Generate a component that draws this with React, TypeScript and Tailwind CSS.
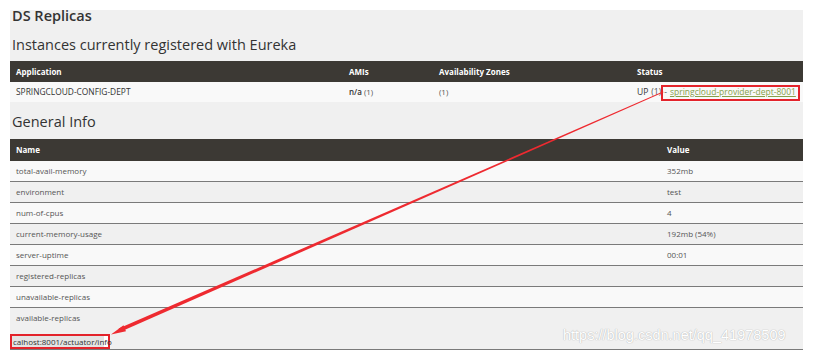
const instances = [
  {
    app: "SPRINGCLOUD-CONFIG-DEPT",
    amis: "n/a",
    zones: "(1)",
    link: "springcloud-provider-dept-8001",
  },
];

const info = [
  ["total-avail-memory", "352mb"],
  ["environment", "test"],
  ["num-of-cpus", "4"],
  ["current-memory-usage", "192mb (54%)"],
  ["server-uptime", "00:01"],
  ["registered-replicas", ""],
  ["unavailable-replicas", ""],
];

function Arrow() {
  // tapered red annotation line with a head at the lower-left end
  return (
    <svg
      className="pointer-events-none absolute left-0 top-0"
      width="816"
      height="356"
      viewBox="0 0 816 356"
    >
      <polygon
        points="663,91.5 663.6,92.3 121,331.6 118.6,328.6"
        fill="#ee2a30"
      />
      <polygon points="111,334.5 123.5,325.2 126,331.2" fill="#ee2a30" />
    </svg>
  );
}

export default function App() {
  return (
    <div className="relative h-[356px] w-[816px] overflow-hidden bg-white font-['Open_Sans',sans-serif] text-[#555]">
      <div className="ml-[10px] mt-[10px] flex h-[339px] w-[793px] flex-col bg-[#f0f0f0]">
        <h1 className="h-[12px] pl-[2px] text-[14.5px] font-semibold leading-[12px] text-[#333]">
          DS Replicas
        </h1>
        <h2 className="mt-[16px] h-[14px] pl-[2px] text-[14.5px] leading-[14px] text-[#333]">
          Instances currently registered with Eureka
        </h2>

        <div className="mt-[9px] text-[8px]">
          <div className="flex h-[21px] items-center bg-[#3c3934] font-bold text-white">
            <div className="w-[333px] pl-[6px]">Application</div>
            <div className="w-[90px] pl-[6px]">AMIs</div>
            <div className="w-[198px] pl-[6px]">Availability Zones</div>
            <div className="flex-1 pl-[6px]">Status</div>
          </div>
          {instances.map((r) => (
            <div key={r.app} className="flex h-[20px] items-center bg-[#f9f9f9]">
              <div className="w-[333px] pl-[6px] text-[8.4px] text-[#333]">{r.app}</div>
              <div className="w-[90px] pl-[6px]">
                <span className="font-semibold text-[#333]">{r.amis}</span> (1)
              </div>
              <div className="w-[198px] pl-[6px]">{r.zones}</div>
              <div className="flex flex-1 items-center pl-[6px] text-[8.5px]">
                <span className="text-[#333]">UP</span>
                <span className="ml-[3px]">(1)</span>
                <span className="ml-[3px]">-</span>
                <a className="ml-[3px] text-[#86a04a] underline">{r.link}</a>
              </div>
            </div>
          ))}
        </div>

        <h2 className="mt-[13px] h-[14px] pl-[2px] text-[14.5px] leading-[14px] text-[#333]">
          General Info
        </h2>

        <div className="mt-[10px] text-[8px]">
          <div className="flex h-[22px] items-center bg-[#3c3934] font-bold text-white">
            <div className="w-[651px] pl-[6px]">Name</div>
            <div className="flex-1 pl-[6px]">Value</div>
          </div>
          {info.map(([k, v], i) => (
            <div
              key={k}
              className={
                i % 2 === 0
                  ? "flex h-[21px] items-center border-b border-[#7a7a7a] bg-[#f9f9f9]"
                  : "flex h-[21px] items-center border-b border-[#7a7a7a] bg-[#f0f0f0]"
              }
            >
              <div className="w-[651px] pl-[6px]">{k}</div>
              <div className="flex-1 pl-[6px]">{v}</div>
            </div>
          ))}
          <div className="flex h-[42px] border-b border-[#7a7a7a] bg-[#f0f0f0]">
            <div className="flex h-[20px] w-[651px] items-center pl-[6px]">
              available-replicas
            </div>
          </div>
        </div>
      </div>

      {/* annotation box around the instance link */}
      <div className="pointer-events-none absolute left-[661px] top-[85px] h-[16px] w-[139px] border-2 border-[#e3232b]" />

      <div className="absolute left-[563px] top-[326px] font-['Liberation_Sans',sans-serif] text-[14.5px] leading-[18px] text-white [text-shadow:0_0_1px_#b8b8b8,0_0_1px_#b8b8b8]">
        https://blog.csdn.net/qq_41978509
      </div>

      <div className="absolute left-[10px] top-[334px] flex h-[15px] w-[100px] items-center border-2 border-[#e3232b] bg-white">
        <div className="flex h-full w-[92px] items-center bg-[#e4e4e4] pl-[1px] text-[8px] text-[#333]">
          calhost:8001/actuator/info
        </div>
      </div>

      <Arrow />
    </div>
  );
}
